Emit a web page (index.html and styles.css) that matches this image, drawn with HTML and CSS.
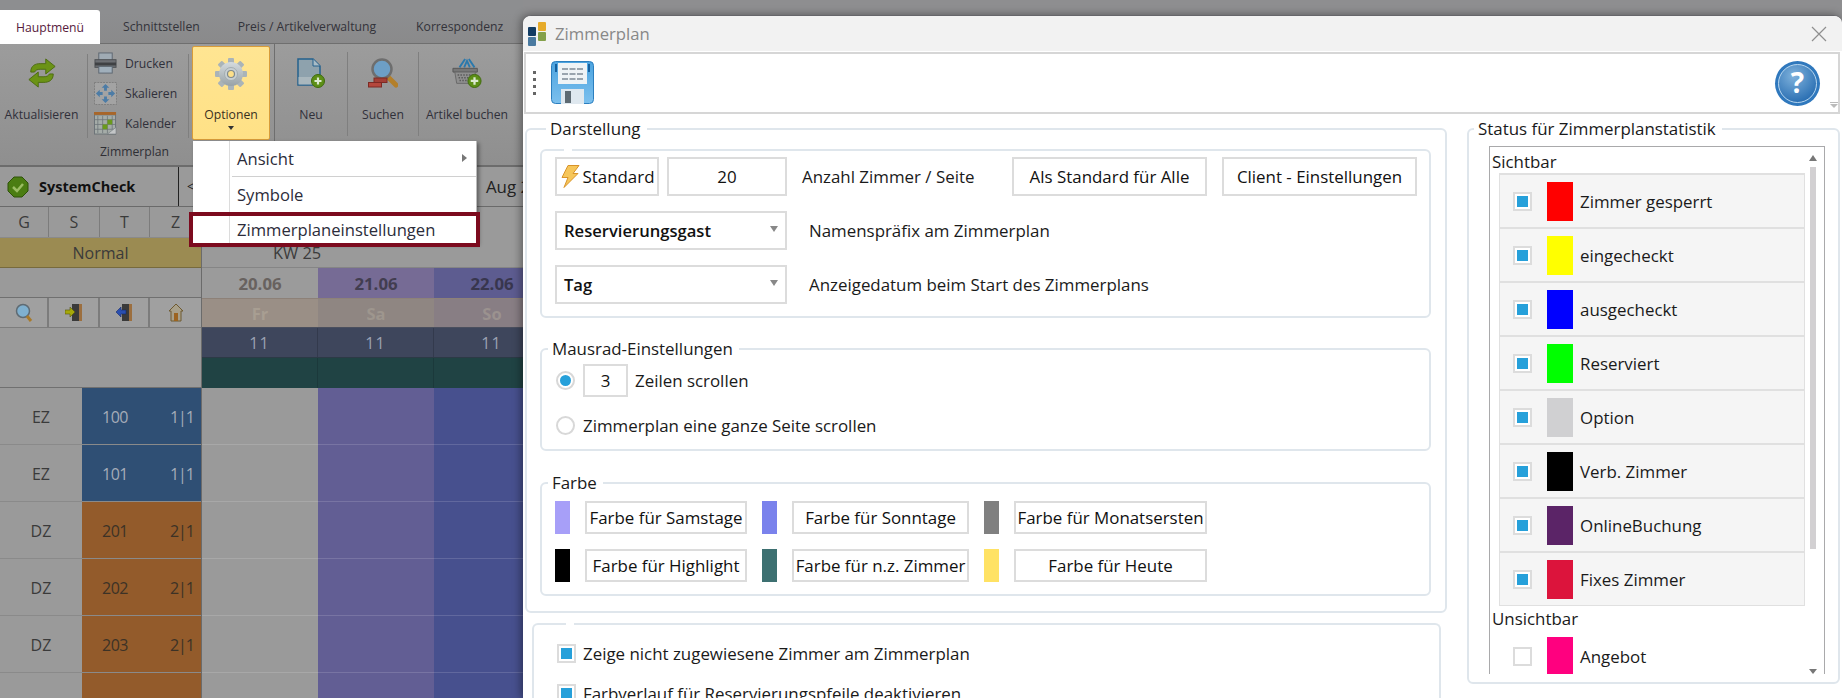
FILE: index.html
```html
<!DOCTYPE html>
<html lang="de">
<head>
<meta charset="utf-8">
<title>Zimmerplan</title>
<link rel="stylesheet" href="styles.css">
</head>
<body>
<div class="app">
  <nav class="tabs">
    <span class="tab tab-active">Hauptmenü</span>
    <span class="tab tab-2">Schnittstellen</span>
    <span class="tab tab-3">Preis / Artikelverwaltung</span>
    <span class="tab tab-4">Korrespondenz</span>
  </nav>
  <div class="ribbon">
    <div class="rgroup">
      <div class="ritems">
        <div class="rbtn rbtn-refresh">
          <svg width="30" height="30" viewBox="0 0 32 32"><path d="M4 15C4 8 9 6 14 6h6V1l10 8-10 8v-5h-6c-3 0-5 1-6 3z" fill="#6b9316" stroke="#4c6b10"/><path d="M28 17c0 7-5 9-10 9h-6v5L2 23l10-8v5h6c3 0 5-1 6-3z" fill="#6b9316" stroke="#4c6b10"/></svg>
          <span>Aktualisieren</span>
        </div>
        <i class="rsep rsep-a"></i>
        <div class="rstack">
          <div class="rsmall">
            <svg width="23" height="23" viewBox="0 0 24 24"><rect x="5" y="1" width="14" height="8" fill="#a0abb4" stroke="#5d6670"/><rect x="1" y="8" width="22" height="8" fill="#6c6f73" stroke="#4e5054"/><rect x="1" y="11" width="22" height="3" fill="#3f4144"/><rect x="5" y="15" width="14" height="7" fill="#a0afbb" stroke="#5d6670"/></svg>
            <span>Drucken</span>
          </div>
          <div class="rsmall">
            <svg width="23" height="23" viewBox="0 0 24 24"><rect x=".5" y=".5" width="23" height="23" fill="#a3a3a3" stroke="#7d7d7d" stroke-dasharray="2 1"/><path d="M12 2l4 4h-2.500v3h-3V6H8zM12 22l-4-4h2.500v-3h3v3H16zM2 12l4-4v2.500h3v3H6V16zM22 12l-4 4v-2.500h-3v-3h3V8z" fill="#4c7ca6"/></svg>
            <span>Skalieren</span>
          </div>
          <div class="rsmall">
            <svg width="23" height="23" viewBox="0 0 24 24"><rect x=".5" y="3" width="22" height="20" fill="#a5aca8" stroke="#6c7378"/><rect y="0" width="23" height="3" fill="#a8662a"/><path d="M4 4v18M9 4v18M14 4v18M19 4v14M1 8h21M1 13h21M1 18h21" stroke="#6c7378" stroke-width=".8"/><rect x="9" y="13" width="5" height="5" fill="#6a9a1c"/><rect x="14" y="8" width="5" height="5" fill="#6a9a1c"/><path d="M14 23l9-7v7z" fill="#c3c6c7" stroke="#6c7378" stroke-width=".6"/></svg>
            <span>Kalender</span>
          </div>
        </div>
        <i class="rsep rsep-b"></i>
        <div class="rbtn rbtn-options">
          <svg width="32" height="32" viewBox="0 0 32 32">
            <defs><linearGradient id="g" x1="0" y1="0" x2="0" y2="1"><stop offset="0" stop-color="#d5dbde"/><stop offset="1" stop-color="#97a2a7"/></linearGradient></defs>
            <g fill="#aab4b8">
              <rect x="13" y="0" width="6" height="32" rx="1"/>
              <rect x="13" y="0" width="6" height="32" rx="1" transform="rotate(45 16 16)"/>
              <rect x="13" y="0" width="6" height="32" rx="1" transform="rotate(90 16 16)"/>
              <rect x="13" y="0" width="6" height="32" rx="1" transform="rotate(135 16 16)"/>
            </g>
            <circle cx="16" cy="16" r="12" fill="url(#g)"/>
            <circle cx="16" cy="16" r="6.500" fill="#c8d0d3" stroke="#a3adb1"/>
            <circle cx="16" cy="16" r="3.500" fill="#fde08a" stroke="#7f8a8e" stroke-width="1.200"/>
          </svg>
          <span>Optionen</span>
          <b class="caret"></b>
        </div>
      </div>
      <div class="rcaption">Zimmerplan</div>
    </div>
    <i class="rsep rsep-full"></i>
    <div class="rbtn rbtn-new">
      <svg width="28" height="30" viewBox="0 0 28 30"><path d="M1 1h15l7 7v19H1z" fill="#8ea2ad" stroke="#24618d" stroke-width="1.500"/><path d="M16 1v7h7" fill="#a9bcc6" stroke="#24618d"/><path d="M1.500 19h21v7.500h-21z" fill="#a9b7bd"/><circle cx="21" cy="23" r="6.500" fill="#5c8f16" stroke="#3f6a0e"/><path d="M21 19.500v7M17.500 23h7" stroke="#dcead0" stroke-width="2.200"/></svg>
      <span>Neu</span>
    </div>
    <i class="rsep"></i>
    <div class="rbtn rbtn-search">
      <svg width="30" height="30" viewBox="0 0 30 30"><path d="M18 17l10 10" stroke="#b37f2a" stroke-width="5" stroke-linecap="round"/><circle cx="14" cy="11" r="9.500" fill="#6d9fc6" stroke="#6e6e6e" stroke-width="2.500"/><rect x="6" y="20" width="13" height="4.500" fill="#a33f36" stroke="#7d2a24"/><rect x="0.500" y="24.500" width="13" height="4.500" fill="#b5473c" stroke="#7d2a24"/></svg>
      <span>Suchen</span>
    </div>
    <i class="rsep"></i>
    <div class="rbtn rbtn-article">
      <svg width="30" height="30" viewBox="0 0 32 32"><path d="M8 10l6-9M24 10l-6-9M13 10l3-7 3 7" stroke="#2a79ad" stroke-width="2" fill="none"/><path d="M1 11h26v4H1z" fill="#777" stroke="#555"/><path d="M3 15h22l-2 12H5z" fill="#8f8f8f" stroke="#666"/><path d="M6 18h16M7 21h14M8 24h12" stroke="#5b5b5b" stroke-width="1.600" stroke-dasharray="1.600 1.400"/><circle cx="24" cy="24.500" r="7" fill="#5c8f16" stroke="#3f6a0e"/><path d="M24 20.500v8M20 24.500h8" stroke="#dcead0" stroke-width="2.400"/></svg>
      <span>Artikel buchen</span>
    </div>
  </div>
  <div class="statusrow">
    <div class="syscheck">
      <svg width="22" height="22" viewBox="0 0 22 22"><path d="M7 1h8l6 6v8l-6 6H7l-6-6V7z" fill="#4b7d12" stroke="#2f5209"/><path d="M6 11l4 4 6-7" stroke="#9bbd63" stroke-width="2.500" fill="none"/></svg>
      <b>SystemCheck</b>
    </div>
    <span class="prev">&lt;</span>
    <span class="month">Aug 2</span>
  </div>
  <div class="plan">
    <div class="plan-left">
      <div class="lrow letters"><span>G</span><span>S</span><span>T</span><span>Z</span></div>
      <div class="lrow normal">Normal</div>
      <div class="lrow blank"></div>
      <div class="lrow iconrow">
        <span><svg width="18" height="20" viewBox="0 0 18 20"><circle cx="8" cy="8" r="6.500" fill="#7fb0cf" stroke="#5f6b73" stroke-width="1.500"/><path d="M12 13l4 5" stroke="#a87a2a" stroke-width="3"/></svg></span>
        <span><svg width="18" height="20" viewBox="0 0 18 20"><path d="M7 1h9v17H7z" fill="#3a3a3a"/><path d="M14 1h3v17h-3z" fill="#9c6f3f"/><path d="M0 7h5V4l5 5-5 5v-3H0z" fill="#a5a80a" stroke="#55560a" stroke-width=".6"/></svg></span>
        <span><svg width="18" height="20" viewBox="0 0 18 20"><path d="M7 1h9v17H7z" fill="#3a3a3a"/><path d="M14 1h3v17h-3z" fill="#9c6f3f"/><path d="M11 7H6V4L1 9l5 5v-3h5z" fill="#2a4fb0" stroke="#16296a" stroke-width=".6"/></svg></span>
        <span><svg width="16" height="20" viewBox="0 0 16 20"><path d="M8 1L1 8h2v10h10V8h2z" fill="#a8a08a" stroke="#6e5a30"/><path d="M6 10h4v8H6z" fill="#9c6420"/></svg></span>
      </div>
      <div class="lrow blank blank-tall"></div>
      <div class="lrow room"><span class="rtype">EZ</span><span class="rnum blue"><em>100</em><em class="occ">1|1</em></span></div>
      <div class="lrow room"><span class="rtype">EZ</span><span class="rnum blue"><em>101</em><em class="occ">1|1</em></span></div>
      <div class="lrow room"><span class="rtype">DZ</span><span class="rnum orange"><em>201</em><em class="occ">2|1</em></span></div>
      <div class="lrow room"><span class="rtype">DZ</span><span class="rnum orange"><em>202</em><em class="occ">2|1</em></span></div>
      <div class="lrow room"><span class="rtype">DZ</span><span class="rnum orange"><em>203</em><em class="occ">2|1</em></span></div>
      <div class="lrow room"><span class="rtype"></span><span class="rnum orange"></span></div>
    </div>
    <div class="plan-right">
      <div class="kw">KW 25</div>
      <div class="days dates"><span class="d-fr">20.06</span><span class="d-sa">21.06</span><span class="d-so">22.06</span></div>
      <div class="days weekdays"><span>Fr</span><span>Sa</span><span>So</span></div>
      <div class="days counts"><span>11</span><span>11</span><span>11</span></div>
      <div class="days greens"><span></span><span></span><span></span></div>
      <div class="days body"><span></span><span></span><span></span></div>
      <div class="days body"><span></span><span></span><span></span></div>
      <div class="days body"><span></span><span></span><span></span></div>
      <div class="days body"><span></span><span></span><span></span></div>
      <div class="days body"><span></span><span></span><span></span></div>
      <div class="days body"><span></span><span></span><span></span></div>
    </div>
  </div>
</div>

<ul class="menu">
  <li class="mi">Ansicht<b class="mi-arrow"></b></li>
  <li class="mi">Symbole</li>
  <li class="mi mi-hl">Zimmerplaneinstellungen</li>
</ul>

<section class="dialog">
  <header class="dlg-title">
    <svg width="18" height="24" viewBox="0 0 18 24"><rect x="0" y="5" width="8" height="9" rx="1" fill="#123c63"/><rect x="0" y="15" width="8" height="9" rx="1" fill="#4a7aa0"/><rect x="10" y="0" width="8" height="9" rx="1" fill="#e6ab2a"/><rect x="10" y="10" width="8" height="9" rx="1" fill="#84a04a"/></svg>
    <span class="dlg-name">Zimmerplan</span>
    <svg class="dlg-close" width="16" height="16" viewBox="0 0 16 16"><path d="M1 1l14 14M15 1L1 15" stroke="#8f8f8f" stroke-width="1.200"/></svg>
  </header>
  <div class="toolbar">
    <span class="grip"><i></i><i></i><i></i><i></i></span>
    <svg class="floppy" width="43" height="44" viewBox="0 0 43 44"><defs><linearGradient id="fl" x1="0" y1="0" x2="0" y2="1"><stop offset="0" stop-color="#4ba3df"/><stop offset="1" stop-color="#7cc0ee"/></linearGradient></defs><rect x=".5" y=".5" width="42" height="42" rx="4" fill="url(#fl)" stroke="#2c7fbf"/><rect x="7" y="2" width="29" height="21" fill="#eef3f6"/><path d="M11 8h21M11 13h21M11 18h21" stroke="#7d8a96" stroke-width="1.500" stroke-dasharray="6 1.500"/><rect x="4" y="3" width="2" height="8" fill="#15609e"/><rect x="37" y="3" width="2" height="8" fill="#15609e"/><rect x="10" y="28" width="23" height="15" fill="#dfe8ef"/><rect x="14" y="30" width="6" height="12" fill="#5e6a72"/></svg>
    <svg class="help" width="47" height="47" viewBox="0 0 47 47"><defs><radialGradient id="hp" cx=".4" cy=".3" r=".8"><stop offset="0" stop-color="#7fb2dc"/><stop offset="1" stop-color="#1f66ad"/></radialGradient></defs><circle cx="23.500" cy="23.500" r="22.500" fill="#2f78bd"/><circle cx="23.500" cy="23.500" r="19" fill="url(#hp)" stroke="#b8d6ee"/><text x="23.500" y="33" text-anchor="middle" class="help-q">?</text></svg>
    <span class="tb-more"></span>
  </div>
  <div class="dlg-body">
    <div class="col-left">
      <fieldset class="fs fs-outer">
        <legend>Darstellung</legend>
        <fieldset class="fs fs-inner fs-main">
          <legend class="nolabel"></legend>
          <div class="frow">
            <div class="ctl btn-standard">
              <svg width="20" height="25" viewBox="0 0 20 24"><path d="M8 1h11l-6 8h5L4 23l4-10H2z" fill="#f6c65a" stroke="#d8932a"/></svg>
              <span>Standard</span>
            </div>
            <div class="ctl input-num">20</div>
            <span class="flabel lbl-anzahl">Anzahl Zimmer / Seite</span>
            <div class="ctl btn-wide btn-first">Als Standard für Alle</div>
            <div class="ctl btn-wide">Client - Einstellungen</div>
          </div>
          <div class="frow">
            <div class="ctl select"><b>Reservierungsgast</b><i class="sel-arrow"></i></div>
            <span class="flabel lbl-sel">Namenspräfix am Zimmerplan</span>
          </div>
          <div class="frow">
            <div class="ctl select"><b>Tag</b><i class="sel-arrow"></i></div>
            <span class="flabel lbl-sel">Anzeigedatum beim Start des Zimmerplans</span>
          </div>
        </fieldset>
        <fieldset class="fs fs-inner fs-wheel">
          <legend>Mausrad-Einstellungen</legend>
          <div class="wheel-row">
            <i class="radio radio-on"></i>
            <div class="ctl input-lines">3</div>
            <span>Zeilen scrollen</span>
          </div>
          <div class="wheel-row wheel-row-2">
            <i class="radio"></i>
            <span>Zimmerplan eine ganze Seite scrollen</span>
          </div>
        </fieldset>
        <fieldset class="fs fs-inner fs-color">
          <legend>Farbe</legend>
          <div class="color-grid">
            <i class="swatch sw-sat"></i><div class="ctl btn-color">Farbe für Samstage</div>
            <i class="swatch sw-sun"></i><div class="ctl btn-color">Farbe für Sonntage</div>
            <i class="swatch sw-first"></i><div class="ctl btn-color">Farbe für Monatsersten</div>
            <i class="swatch sw-high"></i><div class="ctl btn-color">Farbe für Highlight</div>
            <i class="swatch sw-nz"></i><div class="ctl btn-color">Farbe für n.z. Zimmer</div>
            <i class="swatch sw-today"></i><div class="ctl btn-color">Farbe für Heute</div>
          </div>
        </fieldset>
      </fieldset>
      <fieldset class="fs fs-checks">
        <legend class="nolabel"></legend>
        <div class="check-row"><i class="check check-on"></i><span>Zeige nicht zugewiesene Zimmer am Zimmerplan</span></div>
        <div class="check-row"><i class="check check-on"></i><span>Farbverlauf für Reservierungspfeile deaktivieren</span></div>
      </fieldset>
    </div>
    <fieldset class="fs fs-status">
      <legend>Status für Zimmerplanstatistik</legend>
      <div class="listbox">
        <div class="lb-head">Sichtbar</div>
        <div class="lb-items">
          <div class="lb-item"><i class="check check-on"></i><i class="chip" style="background:#ff0000"></i><span>Zimmer gesperrt</span></div>
          <div class="lb-item"><i class="check check-on"></i><i class="chip" style="background:#ffff00"></i><span>eingecheckt</span></div>
          <div class="lb-item"><i class="check check-on"></i><i class="chip" style="background:#0000ff"></i><span>ausgecheckt</span></div>
          <div class="lb-item"><i class="check check-on"></i><i class="chip" style="background:#00ff00"></i><span>Reserviert</span></div>
          <div class="lb-item"><i class="check check-on"></i><i class="chip" style="background:#d0d0d2"></i><span>Option</span></div>
          <div class="lb-item"><i class="check check-on"></i><i class="chip" style="background:#000000"></i><span>Verb. Zimmer</span></div>
          <div class="lb-item"><i class="check check-on"></i><i class="chip" style="background:#5b2467"></i><span>OnlineBuchung</span></div>
          <div class="lb-item"><i class="check check-on"></i><i class="chip" style="background:#dc143c"></i><span>Fixes Zimmer</span></div>
        </div>
        <div class="lb-head lb-head-2">Unsichtbar</div>
        <div class="lb-item lb-item-off"><i class="check"></i><i class="chip" style="background:#ff007f"></i><span>Angebot</span></div>
        <b class="sb-up"></b>
        <i class="sb-thumb"></i>
        <b class="sb-down"></b>
      </div>
    </fieldset>
  </div>
</section>
</body>
</html>
```

FILE: styles.css
```css
* { box-sizing: border-box; }
html, body { margin: 0; padding: 0; height: 698px; overflow: hidden; }
body {
  position: relative;
  width: 1842px;
  font-family: "Open Sans", "Noto Sans", sans-serif;
  font-size: 16.9px;
  color: #1a1a1a;
  background: #8e8e90;
}
svg { display: block; flex: none; }
i, b, em { font-style: normal; }

/* ---------- background application ---------- */
.app { width: 523px; height: 698px; overflow: hidden; }

.tabs {
  height: 44px;
  padding-top: 10px;
  display: flex;
  align-items: stretch;
  background: linear-gradient(#8d8e90 0, #8d8e90 30%, #8a8a8b 100%);
  border-bottom: 1px solid #6f6f6f;
  font-size: 12.2px;
  color: #33333a;
  white-space: nowrap;
}
.tab { display: flex; align-items: center; justify-content: center; flex: none; }
.tab-active { width: 100px; background: #fff; color: #571b3c; border-radius: 0 3px 0 0; margin-bottom: -1px; }
.tab-2 { margin-left: 23px; }
.tab-3 { margin-left: 38px; }
.tab-4 { margin-left: 40px; }

.ribbon {
  height: 123px;
  display: flex;
  background: linear-gradient(#9c9c9c, #8f8f8f);
  border-bottom: 2px solid #6c6c6c;
  font-size: 12.2px;
  color: #30303a;
}
.rgroup { width: 274px; flex: none; }
.ritems { display: flex; height: 97px; padding-top: 2px; }
.rcaption { width: 269px; text-align: center; margin-top: 2px; color: #2f2f35; }
.rbtn {
  display: grid;
  grid-template-rows: 32px 17px auto;
  row-gap: 16px;
  justify-items: center;
  align-content: start;
  padding-top: 12px;
  flex: none;
}
.rbtn span { line-height: 17px; white-space: nowrap; }
.rbtn-refresh { width: 83px; }
.rbtn-options {
  width: 78px;
  height: 94px;
  padding-top: 11px;
  background: linear-gradient(#ffe592, #ffe186);
  border: 1px solid #d89c3a;
  border-radius: 2px;
  color: #3a3020;
}
.caret { width: 0; height: 0; margin-top: -13px; border: 3.500px solid transparent; border-top: 4px solid #333; }
.rbtn-new, .rbtn-search, .rbtn-article { margin-top: 2px; }
.rbtn-new { width: 72px; }
.rbtn-search { width: 70px; }
.rbtn-article { width: 96px; }
.rsep { display: block; flex: none; width: 1px; height: 84px; margin-top: 8px; background: #7f7f7f; }
.rsep-a { margin-left: 4px; margin-right: 6px; }
.rsep-b { margin-right: 3px; }
.rsep-full { height: 121px; margin-top: 0; background: #6e6e6e; }
.rstack { width: 94px; flex: none; padding-top: 5px; display: flex; flex-direction: column; gap: 6px; }
.rsmall { display: flex; align-items: center; gap: 8px; height: 24px; }

.statusrow {
  height: 40px;
  display: flex;
  align-items: center;
  background: #9a9a9a;
  border-bottom: 1px solid #6a6a6a;
}
.syscheck {
  width: 179px;
  height: 100%;
  padding-left: 7px;
  display: flex;
  flex: none;
  align-items: center;
  gap: 10px;
  border-right: 1px solid #222;
  font-size: 14.500px;
  color: #111;
}
.prev { margin-left: 8px; font-size: 12px; flex: none; }
.month { margin-left: 292px; color: #222; white-space: nowrap; flex: none; }

.plan { display: flex; }
.plan-left { width: 202px; flex: none; border-right: 1px solid #6b6b6b; background: #9a9a9a; color: #3a3a3a; }
.plan-right { width: 348px; flex: none; }

.lrow { border-bottom: 1px solid #8a8a8a; }
.letters { height: 31px; display: grid; grid-template-columns: 49px 51px 50px 51px; }
.letters span { display: flex; align-items: center; justify-content: center; border-right: 1px solid #7c7c7c; font-size: 16px; }
.letters span:last-child { border-right: 0; }
.normal { height: 30px; display: flex; align-items: center; justify-content: center; background: #9b8b52; border-bottom: 1px solid #776a3d; font-size: 16px; }
.blank { height: 30px; border-bottom: 1px solid #707070; }
.iconrow { height: 30px; display: grid; grid-template-columns: 49px 51px 50px 51px; background: #a0a0a0; border-bottom: 1px solid #7d7d7d; }
.iconrow span { display: flex; align-items: center; justify-content: center; border-right: 2px solid #7c7c7c; }
.iconrow span:last-child { border-right: 0; }
.blank-tall { height: 60px; }
.room { height: 57px; display: flex; }
.rtype { width: 82px; flex: none; display: flex; align-items: center; justify-content: center; font-size: 16px; padding-top: 1px; }
.rnum { flex: 1; display: flex; align-items: center; justify-content: space-between; padding: 1px 7px 0 20px; font-size: 16px; letter-spacing: -.5px; }
.occ { letter-spacing: -1px; }
.blue { background: #2f4f74; color: #a5acb8; }
.orange { background: #935b2b; color: #3c3226; }

.kw { height: 61px; padding-top: 33px; padding-left: 71px; background: #9a9a9a; border-bottom: 1px solid #858585; color: #3c3c3c; font-size: 16.400px; line-height: 26px; }
.days { display: grid; grid-template-columns: 116px 116px 116px; height: 30px; }
.days span { display: flex; align-items: center; justify-content: center; }
.dates { font-weight: 700; font-size: 16.800px; }
.dates .d-fr { background: #9b9b9b; color: #68625f; }
.dates .d-sa { background: #766b95; color: #423d50; }
.dates .d-so { background: #5d5c90; color: #38364e; }
.weekdays { font-weight: 700; font-size: 16.500px; color: #a89e92; border-top: 1px solid #8d8178; border-bottom: 1px solid #4a4f5e; }
.weekdays span:nth-child(1) { background: #9a8f86; }
.weekdays span:nth-child(2) { background: #8f8682; color: #9e968e; }
.weekdays span:nth-child(3) { background: #887e84; color: #9b928f; }
.counts { background: #3e465c; color: #9aa1b2; font-size: 16px; border-bottom: 1px solid #2c3a46; }
.counts span { border-right: 1px solid #333a4d; letter-spacing: 1px; }
.greens { background: #204344; }
.greens span { border-right: 1px solid #1b393b; }
.body { height: 57px; }
.body span { border-bottom: 1px solid rgba(255,255,255,.14); }
.body span:nth-child(1) { background: #9a9a9a; }
.body span:nth-child(2) { background: #625e94; }
.body span:nth-child(3) { background: #47508e; }

/* ---------- dropdown menu ---------- */
.menu {
  position: absolute;
  left: 193px;
  top: 141px;
  width: 284px;
  margin: 0;
  padding: 0;
  list-style: none;
  background: linear-gradient(90deg, #fff 36px, #dcdcdc 36px, #dcdcdc 37px, #fff 37px);
  border-right: 1px solid #bbb;
  box-shadow: 2px 2px 4px rgba(0,0,0,.4);
  font-size: 16.600px;
  color: #2c2c3a;
}
.mi { position: relative; height: 36px; padding-left: 44px; line-height: 35px; }
.mi::after { content: ""; position: absolute; left: 39px; right: 0; top: 35px; height: 1px; background: #d0d0d0; }
.mi-hl { height: 27px; margin-top: 3px; line-height: 27px; outline: 4px solid #7c0a1e; }
.mi-hl::after { display: none; }
.mi-arrow { position: absolute; right: 5px; top: 13px; width: 0; height: 0; border: 4px solid transparent; border-left: 5px solid #777; }

/* ---------- dialog window ---------- */
.dialog {
  position: absolute;
  left: 523px;
  top: 15px;
  width: 1319px;
  height: 683px;
  background: #fff;
  border-top: 1px solid #66666a;
  border-radius: 8px 8px 0 0;
  box-shadow: -2px 0 8px rgba(0,0,0,.4);
  overflow: hidden;
}
.dlg-title {
  height: 35px;
  display: flex;
  align-items: center;
  padding-left: 5px;
  background: #f2f2f2;
  color: #888;
  font-size: 16.700px;
}
.dlg-name { margin-left: 9px; }
.dlg-close { margin-left: auto; margin-right: 15px; }
.toolbar {
  height: 62px;
  margin: 1px 2px 0 1px;
  display: flex;
  align-items: center;
  position: relative;
  border: 2px solid #d6d6d6;
}
.grip { display: flex; flex-direction: column; gap: 4px; margin-left: 7px; }
.grip i { width: 3px; height: 3px; background: #666; }
.floppy { margin-left: 15px; }
.help { margin-left: auto; margin-right: 17px; }
.help-q { font: 700 28px "Open Sans", sans-serif; fill: #fff; }
.tb-more { position: absolute; right: 0; bottom: 4px; width: 8px; height: 6px; border-top: 1px solid #bbb; }
.tb-more::after { content: ""; position: absolute; left: 0; top: 1px; border: 4px solid transparent; border-top: 4px solid #bbb; }
.dlg-body { display: flex; align-items: flex-start; padding: 4px 2px 0 2px; gap: 20px; }

.fs { margin: 0; padding: 0; border: 2px solid #dfe6ec; border-radius: 6px; min-width: 0; }
.fs legend { padding: 0 6px 0 4px; font-size: 16.900px; line-height: 22px; color: #1a1a1a; white-space: nowrap; }
.fs legend.nolabel { width: 8px; height: 0; padding: 0; margin-left: 9px; line-height: 0; }
.col-left { width: 922px; flex: none; }
.fs-outer { padding: 0 14px 15px 13px; }
.fs-outer > legend { margin-left: 6px; }
.fs-inner { width: 891px; }
.fs-main { margin-top: 9px; padding: 6px 12px 12px 13px; display: flex; flex-direction: column; gap: 15px; }
.fs-wheel { margin-top: 20px; padding: 4px 0 0 14px; height: 113px; }
.fs-wheel > legend { margin-left: -8px; }
.fs-color { margin-top: 21px; height: 124px; padding: 7px 0 0 13px; }
.fs-color > legend { margin-left: -7px; }

.frow { display: flex; align-items: center; height: 39px; }
.ctl {
  display: flex;
  align-items: center;
  justify-content: center;
  background: #fff;
  border: 2px solid #dcdcdc;
  color: #111;
  white-space: nowrap;
}
.btn-standard { width: 104px; height: 39px; margin-right: 8px; gap: 3px; }
.input-num { width: 120px; height: 39px; }
.flabel { white-space: nowrap; }
.lbl-anzahl { margin-left: 15px; width: 210px; flex: none; }
.btn-wide { width: 195px; height: 39px; flex: none; }
.btn-first { margin-right: 15px; }
.select { width: 232px; height: 39px; justify-content: flex-start; padding-left: 7px; position: relative; flex: none; }
.select b { font-weight: 600; font-size: 16.600px; }
.sel-arrow { position: absolute; right: 7px; top: 13px; border: 4.500px solid transparent; border-top: 6px solid #888; }
.lbl-sel { margin-left: 22px; }

.wheel-row { display: flex; align-items: center; height: 33px; }
.wheel-row-2 { margin-top: 12px; }
.radio { display: block; width: 19px; height: 19px; border-radius: 50%; border: 2px solid #d8d8d8; background: #fff; flex: none; position: relative; margin-right: 8px; }
.radio-on::after { content: ""; position: absolute; left: 2px; top: 2px; width: 11px; height: 11px; border-radius: 50%; background: #26a0da; }
.input-lines { width: 45px; height: 33px; margin-right: 7px; }

.color-grid { display: grid; grid-template-columns: 15px 162px 15px 177px 15px 193px; grid-auto-rows: 33px; gap: 15px; }
.swatch { display: block; }
.sw-sat { background: #a79ff8; }
.sw-sun { background: #7a82ec; }
.sw-first { background: #808080; }
.sw-high { background: #000; }
.sw-nz { background: #3d7071; }
.sw-today { background: #ffe264; }

.fs-checks { width: 909px; margin: 10px 0 0 7px; padding: 8px 0 0 23px; border-bottom: 0; }
.check-row { display: flex; align-items: center; height: 40px; gap: 7px; }
.check { display: block; position: relative; width: 19px; height: 19px; flex: none; background: #fff; border: 2px solid #dcdcdc; }
.check-on::after { content: ""; position: absolute; left: 2px; top: 2px; width: 11px; height: 11px; background: #26a0da; }

.fs-status { width: 373px; height: 566px; padding: 6px 13px 0 20px; }
.fs-status > legend { margin-left: -15px; }
.listbox { position: relative; height: 528px; overflow: hidden; border: solid #a9a9ab; border-width: 1px 1px 0 1px; padding-left: 2px; }
.lb-head { height: 26px; line-height: 30px; }
.lb-items { margin-left: 7px; width: 306px; background: #f5f5f5; border: solid #e0e0e0; border-width: 0 1px 1px 1px; }
.lb-items .lb-item { border-top: 2px solid #e0e0e0; }
.lb-item { display: flex; align-items: center; height: 54px; padding-left: 13px; }
.lb-item .chip { display: block; width: 26px; height: 39px; margin: 0 7px 0 15px; flex: none; }
.lb-head-2 { line-height: 26px; }
.lb-item-off { margin-left: 8px; align-items: flex-start; padding-top: 5px; }
.lb-item-off .check { margin-top: 10px; }
.lb-item-off span { margin-top: 8px; }
.sb-up { position: absolute; right: 7px; top: 8px; border: 4.500px solid transparent; border-bottom: 6px solid #777; border-top: 0; }
.sb-thumb { position: absolute; right: 8px; top: 20px; width: 6px; height: 382px; background: #d2d0d2; }
.sb-down { position: absolute; right: 7px; bottom: 0; border: 4.500px solid transparent; border-top: 5px solid #777; border-bottom: 0; }
```
